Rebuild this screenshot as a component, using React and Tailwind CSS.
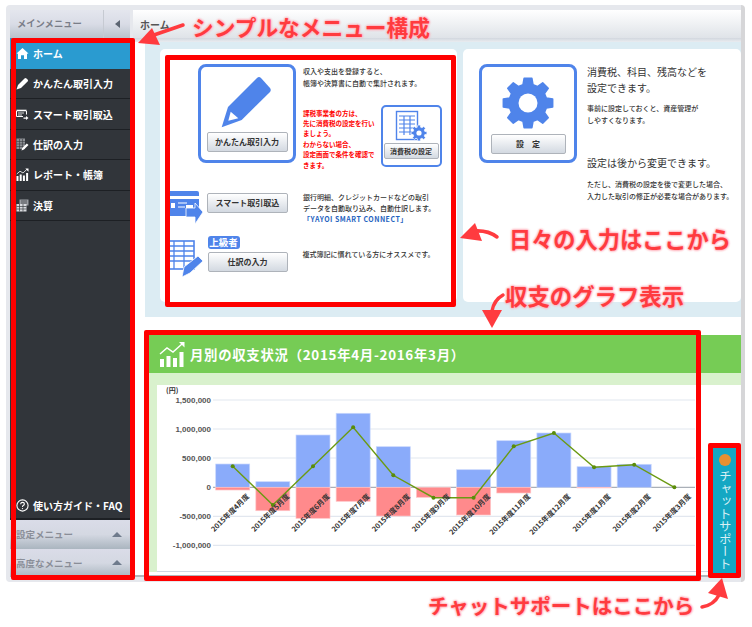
const blue = '#4f84ea'

function gearPath(cx, cy, outer, root, teeth) {
  const pts = []
  const step = (Math.PI * 2) / teeth
  for (let i = 0; i < teeth; i++) {
    const a = i * step - Math.PI / 2
    const p = (r, o) => `${(cx + r * Math.cos(a + o * step)).toFixed(2)} ${(cy + r * Math.sin(a + o * step)).toFixed(2)}`
    pts.push(p(root, -0.34), p(outer, -0.2), p(outer, 0.2), p(root, 0.34))
  }
  return 'M' + pts.join('L') + 'Z'
}

const HomeIcon = () => (
  <svg width="13" height="13" viewBox="0 0 13 13" fill="#fff">
    <path d="M6.5 1 L12.5 6.6 L11 6.8 L11 12 L8 12 L8 8.2 L5 8.2 L5 12 L2 12 L2 6.8 L0.5 6.6 Z" />
  </svg>
)
const PencilIcon = () => (
  <svg width="13" height="13" viewBox="0 0 13 13" fill="#fff">
    <path d="M0.5 12.5 L2 8 L8.5 1.5 Q9.5 0.7 10.5 1.5 L11.8 2.8 Q12.5 3.6 11.6 4.6 L5 11 Z" />
  </svg>
)
const CardIcon = () => (
  <svg width="13" height="13" viewBox="0 0 13 13" fill="none" stroke="#fff">
    <path d="M0.5 2.5 H10.5" strokeWidth="1.6" />
    <path d="M0.5 3 V8.5 H7 M10.5 3 V6.5" />
    <path d="M2 5 H8 M2 7 H6" strokeWidth="0.8" />
    <path d="M7.5 9.5 H10 V8 L12.5 10 L10 12 V10.8 H7.5 Z" fill="#fff" stroke="none" />
  </svg>
)
const LedgerIcon = () => (
  <svg width="13" height="13" viewBox="0 0 13 13" fill="none">
    <rect x="0.5" y="0.5" width="8.5" height="10.5" fill="#8c8f94" />
    <path d="M0.5 3.5 H9 M0.5 6 H9 M0.5 8.5 H9 M3.5 1 V11 M6.5 1 V11" stroke="#3a3d42" strokeWidth="0.6" />
    <path d="M5.5 12.5 L6.2 10 L10.8 5.5 L12.5 7 L8 11.6 Z" fill="#fff" />
  </svg>
)
const ReportIcon = ({ size = 13, stroke = 1 }) => (
  <svg width={size} height={size} viewBox="0 0 13 13" fill="#fff">
    <rect x="0.5" y="8" width="2" height="5" />
    <rect x="3.7" y="6.5" width="2" height="6.5" />
    <rect x="6.9" y="7.5" width="2" height="5.5" />
    <rect x="10.1" y="5" width="2" height="8" />
    <path d="M0.8 6 L4 3.2 L7 5 L11 1.2" fill="none" stroke="#fff" strokeWidth={stroke * 0.8} />
    <path d="M9.3 0.5 H12.5 V3.7 Z" />
  </svg>
)
const CalcIcon = () => (
  <svg width="13" height="13" viewBox="0 0 13 13">
    <rect x="3.5" y="0.5" width="9" height="6" fill="#9a9da2" />
    <rect x="0.5" y="5" width="10" height="7.5" fill="#d8dade" />
    <path d="M0.5 7.5 H10.5 M0.5 10 H10.5 M3.5 5 V12.5 M7 5 V12.5" stroke="#3a3d42" strokeWidth="0.7" />
    <path d="M5 2 H11 M5 4 H11" stroke="#3a3d42" strokeWidth="0.7" />
  </svg>
)
const HelpIcon = () => (
  <svg width="13" height="13" viewBox="0 0 13 13" fill="none" stroke="#fff">
    <circle cx="6.5" cy="6.5" r="5.6" strokeWidth="1.1" />
    <path d="M4.6 5.2 Q4.8 3.4 6.5 3.4 Q8.4 3.4 8.4 5 Q8.4 6 7.2 6.6 Q6.5 7 6.5 8" strokeWidth="1.1" />
    <circle cx="6.5" cy="9.6" r="0.7" fill="#fff" stroke="none" />
  </svg>
)

const menu = [
  { label: 'かんたん取引入力', icon: <PencilIcon /> },
  { label: 'スマート取引取込', icon: <CardIcon /> },
  { label: '仕訳の入力', icon: <LedgerIcon /> },
  { label: 'レポート・帳簿', icon: <ReportIcon /> },
  { label: '決算', icon: <CalcIcon /> },
]

function Sidebar() {
  return (
    <aside className="w-[120px] flex flex-col shrink-0">
      <div className="h-[28px] flex shrink-0 bg-linear-to-b from-[#e4e6ee] via-[#d9dce6] to-[#b9c2cb]">
        <div className="w-[93px] flex items-center pl-[7px] text-[9.3px] font-bold text-[#7a7e88]">メインメニュー</div>
        <div className="flex-1 flex items-center justify-center border-l border-[#c6cad2]">
          <div className="w-0 h-0 border-y-[4px] border-y-transparent border-r-[5px] border-r-[#5d6672]" />
        </div>
      </div>
      <div className="h-[31px] shrink-0 bg-[#2a9bd0] flex items-center gap-[4px] pl-[6px] text-[10px] font-bold text-white">
        <HomeIcon />
        <span>ホーム</span>
      </div>
      <div className="flex-1 bg-[#31353a] flex flex-col">
        {menu.map((m) => (
          <div key={m.label} className="h-[30.4px] flex items-center gap-[4px] pl-[6px] border-b border-[#1d2024] text-[10px] font-bold text-white">
            {m.icon}
            <span>{m.label}</span>
          </div>
        ))}
        <div className="flex-1" />
        <div className="h-[30px] flex items-center gap-[4px] pl-[6px] pt-[2px] border-b-2 border-[#1d2024] text-[10px] font-bold text-white">
          <HelpIcon />
          <span>使い方ガイド・FAQ</span>
        </div>
      </div>
      {['設定メニュー', '高度なメニュー'].map((t) => (
        <div key={t} className="h-[28.5px] shrink-0 flex items-center justify-between pl-[6px] pr-[8px] bg-linear-to-b from-[#dadce8] via-[#d4d8e2] to-[#aab5bf] text-[9.5px] font-bold text-[#8a8e98]">
          <span>{t}</span>
          <div className="w-0 h-0 border-x-[5px] border-x-transparent border-b-[5px] border-b-[#6f7b8c]" />
        </div>
      ))}
    </aside>
  )
}

const Btn = ({ className, children }) => (
  <div className={`flex items-center justify-center rounded-[2px] border border-[#aeb3ba] bg-linear-to-b from-white to-[#d3d9e1] font-bold text-[#333] ${className}`}>
    {children}
  </div>
)

function LeftCard() {
  return (
    <div className="w-[297px] h-[253px] bg-white rounded-[5px] shrink-0 flex flex-col">
      <div className="flex ml-[38px] mt-[15px] h-[103px]">
        <div className="w-[98px] h-[99px] border-[3px] border-[#4f84ea] rounded-[8px] shrink-0 flex flex-col items-center">
          <svg width="60" height="60" viewBox="218 70 60 60" className="mt-[3px]">
            <path d="M222.7 127.3 L229 107 L258 78 Q260 76 262 78 L271 88 Q272.5 90 271 92 L242.7 120 Z" fill={blue} />
            <path d="M229.3 120.7 L231.7 111.7 L239.3 118.3 Z" fill="#fff" />
          </svg>
          <Btn className="w-[81px] h-[20px] mt-[2px] text-[8px]">かんたん取引入力</Btn>
        </div>
        <div className="ml-[7px] mt-[2px] w-[140px] shrink-0">
          <p className="text-[7px] leading-[11.5px] text-[#333] font-medium">収入や支出を登録すると、<br />帳簿や決算書に自動で集計されます。</p>
          <div className="flex mt-[16px]">
            <p className="w-[77.5px] shrink-0 mt-[2.5px] text-[6.5px] leading-[10.4px] font-bold text-[#ff0000] whitespace-nowrap">
              課税事業者の方は、<br />先に消費税の設定を行い<br />ましょう。<br />わからない場合、<br />設定画面で条件を確認で<br />きます。
            </p>
            <div className="w-[61px] h-[62px] shrink-0 border-2 border-[#4f84ea] rounded-[5px] flex flex-col items-center">
              <svg width="36" height="33" viewBox="392 110 36 33" className="mt-[1px]">
                <rect x="395.5" y="113.5" width="21" height="28" fill="#fff" stroke={blue} strokeWidth="1.4" />
                <path d="M398 118 H414 M398 122 H414 M398 126 H414 M398 130 H414 M398 134 H414 M403 118 V137 M409 118 V137" stroke={blue} strokeWidth="1.2" />
                <path d={gearPath(418, 135, 8, 6, 8)} fill={blue} stroke="#fff" strokeWidth="0.6" />
                <circle cx="418" cy="135" r="2.6" fill="#fff" />
              </svg>
              <Btn className="w-[55px] h-[16px] mt-[2px] text-[7px]">消費税の設定</Btn>
            </div>
          </div>
        </div>
      </div>
      <div className="flex items-start ml-[10px] mt-[24px]">
        <svg width="34" height="33" viewBox="170 191 34 33" className="shrink-0">
          <path d="M165 191 H197 Q199 191 199 193 V196 H165 Z" fill={blue} />
          <path d="M165 199 H199 V209 H193 V205 L186 205 V216 H165 Z" fill={blue} />
          <rect x="171" y="203" width="4" height="5" fill="#fff" />
          <path d="M178 203 H187 M178 207 H185" stroke="#fff" strokeWidth="1.2" />
          <path d="M186 208 H195 V203 L203 212 L195 224 V217 H186 Z" fill={blue} stroke="#fff" strokeWidth="0.8" />
        </svg>
        <Btn className="w-[81px] h-[20px] ml-[3px] mt-[2px] shrink-0 text-[8px]">スマート取引取込</Btn>
        <p className="ml-[15px] text-[7px] leading-[11px] text-[#333] font-medium whitespace-nowrap mt-[1px]">
          銀行明細、クレジットカードなどの取引<br />データを自動取り込み、自動仕訳します。<br />
          <span className="text-[#1f63c0] font-bold tracking-[0.5px]">「YAYOI SMART CONNECT」</span>
        </p>
      </div>
      <div className="flex items-start ml-[10px] mt-[11px]">
        <svg width="34" height="38" viewBox="170 239 34 38" className="shrink-0 mt-[4px]">
          <rect x="165" y="240" width="29" height="28" fill="#fff" stroke={blue} strokeWidth="1.6" />
          <path d="M165 245 H194 M165 250 H194 M165 255 H194 M165 260 H194 M174 240 V268 M184 240 V268" stroke={blue} strokeWidth="1.3" />
          <path d="M182 276 L184 266 L198 255 L203 260 L190 272 Z" fill={blue} stroke="#fff" strokeWidth="0.8" />
        </svg>
        <div className="ml-[3.5px] shrink-0">
          <div className="w-[32px] h-[13px] rounded-[3px] bg-[#4f84ea] text-white text-[9.5px] font-bold flex items-center justify-center">上級者</div>
          <Btn className="w-[80px] h-[20px] mt-[2.5px] text-[8px]">仕訳の入力</Btn>
        </div>
        <p className="ml-[15px] mt-[12.5px] text-[7px] leading-[11px] text-[#333] font-medium whitespace-nowrap">複式簿記に慣れている方にオススメです。</p>
      </div>
    </div>
  )
}

function RightCard() {
  return (
    <div className="w-[278px] h-[253px] bg-white rounded-[5px] shrink-0 flex items-start pl-[16px] pt-[15px]">
      <div className="w-[98px] h-[99px] border-[3px] border-[#4f84ea] rounded-[8px] shrink-0 flex flex-col items-center">
        <svg width="54" height="54" viewBox="0 0 54 54" className="mt-[9px]">
          <path d={gearPath(27, 27, 25, 19, 8)} fill={blue} stroke={blue} strokeWidth="1.5" strokeLinejoin="round" />
          <circle cx="27" cy="27" r="9.5" fill="#fff" />
        </svg>
        <Btn className="w-[75px] h-[20px] mt-[4px] text-[8px] tracking-[8px] pl-[8px]">設定</Btn>
      </div>
      <div className="ml-[10px] text-[#333] whitespace-nowrap">
        <p className="text-[10px] leading-[16px]">消費税、科目、残高などを<br />設定できます。</p>
        <p className="mt-[6px] text-[7px] leading-[12px] font-medium">事前に設定しておくと、資産管理が<br />しやすくなります。</p>
        <p className="mt-[29px] text-[10px] leading-[16px]">設定は後から変更できます。</p>
        <p className="mt-[7px] text-[7px] leading-[12px] font-medium">ただし、消費税の設定を後で変更した場合、<br />入力した取引の修正が必要な場合があります。</p>
      </div>
    </div>
  )
}

const months = [
  { m: '4月度', plus: 464, minus: 490, line: 466.3 },
  { m: '5月度', plus: 481.7, minus: 510.7, line: 505 },
  { m: '6月度', plus: 435, minus: 518.3, line: 466.3 },
  { m: '7月度', plus: 413.3, minus: 501.3, line: 427.3 },
  { m: '8月度', plus: 446.7, minus: 516, line: 475.3 },
  { m: '9月度', plus: 487.3, minus: 497.3, line: 497.7 },
  { m: '10月度', plus: 469.7, minus: 515, line: 497.7 },
  { m: '11月度', plus: 440.7, minus: 493, line: 446.3 },
  { m: '12月度', plus: 433, minus: 487.3, line: 433 },
  { m: '1月度', plus: 466.7, minus: 487.9, line: 467.3 },
  { m: '2月度', plus: 464.3, minus: 487.3, line: 464.7 },
  { m: '3月度', plus: 487.3, minus: 487.3, line: 487.3 },
]
const ticks = [
  ['1,500,000', 400],
  ['1,000,000', 429],
  ['500,000', 458],
  ['0', 487.3],
  ['-500,000', 516.3],
  ['-1,000,000', 545.3],
]
const cx = (i) => 232.7 + i * 40.15

function Chart() {
  const pts = months.map((d, i) => `${cx(i)},${d.line}`).join(' ')
  return (
    <svg width="584" height="186" viewBox="157 385 584 186" className="block overflow-visible">
      <text x="166" y="392.5" fontSize="7" fontWeight="700" fill="#333">(円)</text>
      {ticks.map(([t, y]) => (
        <g key={t}>
          <line x1="213" x2="695" y1={y} y2={y} stroke={t === '0' ? '#aab0b8' : '#e2e7ef'} strokeWidth="1.2" />
          <text x="211" y={y + 2.8} fontSize="8" fontWeight="700" textAnchor="end" fill="#555" fontFamily="Liberation Sans">{t}</text>
        </g>
      ))}
      {months.map((d, i) => (
        <g key={d.m}>
          {d.plus < 487.3 && <rect x={cx(i) - 17} y={d.plus} width="34" height={487.3 - d.plus} fill="#8aabfa" stroke="#c8d8fc" strokeWidth="0.7" />}
          {d.minus > 487.3 && <rect x={cx(i) - 17} y="487.3" width="34" height={d.minus - 487.3} fill="#ff8a8c" stroke="#ffc4c6" strokeWidth="0.7" />}
        </g>
      ))}
      <polyline points={pts} fill="none" stroke="#6b9a12" strokeWidth="1.4" />
      {months.map((d, i) => (
        <circle key={d.m} cx={cx(i)} cy={d.line} r="2" fill="#5a8c0a" />
      ))}
      {months.map((d, i) => (
        <text key={d.m} x={cx(i) + 17} y="497" fontSize="7.2" fontWeight="700" textAnchor="end" fill="#333" transform={`rotate(-45 ${cx(i) + 17} 497)`}>
          2015年度{d.m}
        </text>
      ))}
    </svg>
  )
}

function Main() {
  return (
    <main className="flex-1 ml-[3px] bg-white flex flex-col overflow-hidden">
      <div className="h-[28px] shrink-0 flex items-center pl-[7px] bg-linear-to-b from-white to-[#dfe3e8] text-[10px] font-bold text-[#555]">ホーム</div>
      <div className="h-[4px] shrink-0 bg-linear-to-b from-[#d2d7de] to-[#e9ecf0]" />
      <div className="ml-[12px]">
        <div className="bg-[#dcecf3] flex gap-[6px] pl-[15px] pt-[7px] pb-[15px]">
          <LeftCard />
          <RightCard />
        </div>
        <div className="mt-[18px] h-[38px] bg-[#76cc55] flex items-center pl-[14px] gap-[5px] text-white font-bold text-[13.4px] tracking-[0.7px]">
          <svg width="26" height="26" viewBox="0 0 26 26" fill="#fff">
            <rect x="1" y="18" width="4" height="8" />
            <rect x="7.5" y="15" width="4" height="11" />
            <rect x="14" y="17" width="4" height="9" />
            <rect x="20.5" y="11" width="4" height="15" />
            <path d="M1 13 L8 7 L14 11 L23 3" fill="none" stroke="#fff" strokeWidth="1.4" />
            <path d="M20 1 H25.5 V6.5 Z" />
          </svg>
          <span>月別の収支状況（2015年4月-2016年3月）</span>
        </div>
        <div className="bg-[#d9f1cd] pl-[12px] pt-[12px]">
          <div className="bg-white border-b border-[#cfd6e2] h-[187px]">
            <Chart />
          </div>
        </div>
      </div>
      <div className="h-[3px] shrink-0" />
      <div className="flex-1 bg-[#b1b5bb]" />
    </main>
  )
}

const frame = 'absolute border-[5px] border-[#ff0000] rounded-[2px] pointer-events-none'
const note = 'absolute whitespace-nowrap font-bold text-[#ff3b3f] leading-none [text-shadow:0_0_2px_#ffb0ba,0_0_2px_#ffb0ba,0_0_3px_#ffc0c8,0_0_3px_#ffc0c8]'

export default function App() {
  return (
    <div className="relative w-[752px] h-[627px] bg-white overflow-hidden pt-[5px] pl-[6px] [font-family:'Noto_Sans_CJK_JP',sans-serif]">
      <div className="w-[739px] h-[577px] rounded-[4px] bg-[#e6e8ed] pt-[5px] pl-[4px] pb-[5px] border-r-[4px] border-r-[#d6d6d8] flex">
        <Sidebar />
        <Main />
      </div>

      {/* chat tab */}
      <div className="absolute left-[713px] top-[448px] w-[23px] h-[125px] bg-[#14a7c3] flex flex-col items-center pt-[6px]">
        <div className="w-[12px] h-[12px] rounded-full bg-[#e8902f]" />
        <span className="mt-[4px] text-[12.5px] leading-none text-[#d9f0f5] [writing-mode:vertical-rl]">チャットサポート</span>
      </div>

      {/* annotations */}
      <div className={`${frame} left-[11px] top-[38px] w-[124px] h-[542px]`} />
      <div className={`${frame} left-[165px] top-[55px] w-[291px] h-[252px]`} />
      <div className={`${frame} left-[144px] top-[330px] w-[557px] h-[251px]`} />
      <div className={`${frame} left-[708px] top-[443px] w-[33px] h-[135px]`} />

      <span className={`${note} left-[192px] top-[16px] text-[21.7px]`}>シンプルなメニュー構成</span>
      <span className={`${note} left-[509px] top-[227px] text-[22.2px]`}>日々の入力はここから</span>
      <span className={`${note} left-[505px] top-[284px] text-[22.4px]`}>収支のグラフ表示</span>
      <span className={`${note} left-[428px] top-[595px] text-[20.5px]`}>チャットサポートはここから</span>

      <svg className="absolute inset-0 pointer-events-none" width="752" height="627" viewBox="0 0 752 627" fill="#ff3b3f" stroke="none">
        <path d="M183 25 L151 36" fill="none" stroke="#ff3b3f" strokeWidth="3.5" strokeLinecap="round" />
        <path d="M138 43 L152 28 L160 45 Z" />
        <path d="M497 237 Q488 230 474 231" fill="none" stroke="#ff3b3f" strokeWidth="3.5" strokeLinecap="round" />
        <path d="M460 238 L475 223 L482 241 Z" />
        <path d="M503 295 Q494 300 492 311" fill="none" stroke="#ff3b3f" strokeWidth="3.5" strokeLinecap="round" />
        <path d="M492 328 L482 310 L502 310 Z" />
        <path d="M702 607 Q714 605 719 595" fill="none" stroke="#ff3b3f" strokeWidth="3.5" strokeLinecap="round" />
        <path d="M722 578 L708 593 L728 599 Z" />
      </svg>
    </div>
  )
}
